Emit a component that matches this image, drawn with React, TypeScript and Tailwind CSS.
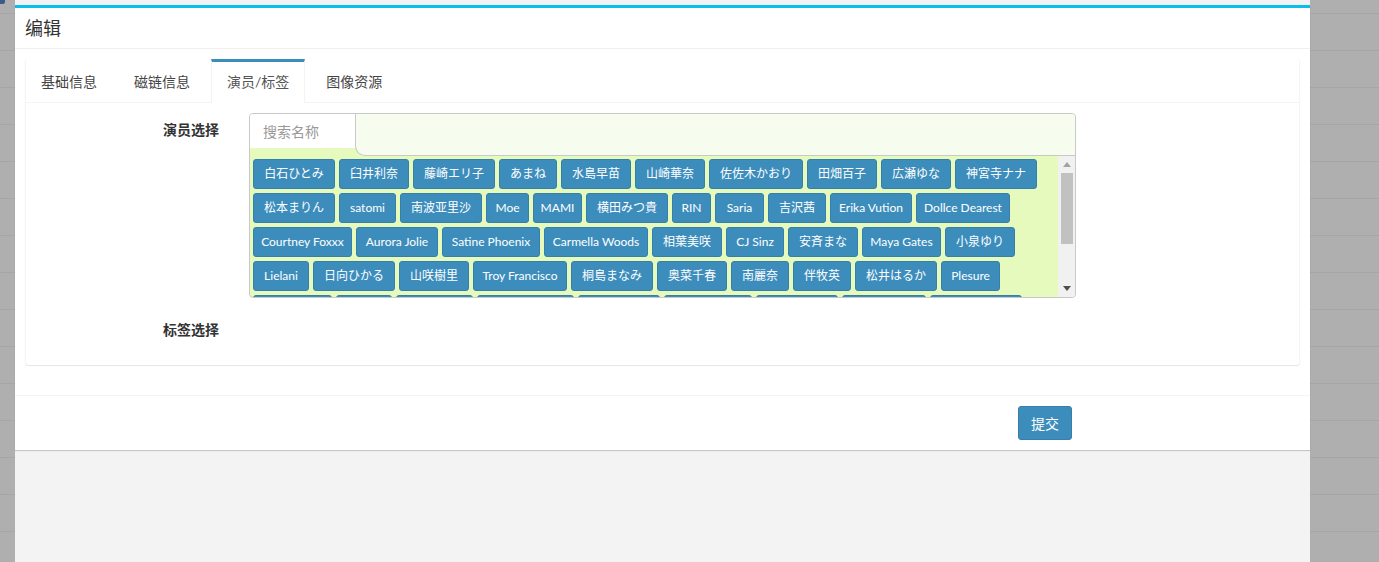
import React from "react";

type Tag = { n: string; w: number };

const rows: Tag[][] = [
  [
    { n: "白石ひとみ", w: 82 },
    { n: "臼井利奈", w: 70 },
    { n: "藤崎エリ子", w: 82 },
    { n: "あまね", w: 58 },
    { n: "水島早苗", w: 70 },
    { n: "山崎華奈", w: 70 },
    { n: "佐佐木かおり", w: 94 },
    { n: "田畑百子", w: 70 },
    { n: "広瀬ゆな", w: 70 },
    { n: "神宮寺ナナ", w: 82 },
  ],
  [
    { n: "松本まりん", w: 82 },
    { n: "satomi", w: 57 },
    { n: "南波亚里沙", w: 82 },
    { n: "Moe", w: 43 },
    { n: "MAMI", w: 49 },
    { n: "横田みつ貴", w: 82 },
    { n: "RIN", w: 39 },
    { n: "Saria", w: 49 },
    { n: "吉沢茜", w: 58 },
    { n: "Erika Vution", w: 82 },
    { n: "Dollce Dearest", w: 94 },
  ],
  [
    { n: "Courtney Foxxx", w: 99 },
    { n: "Aurora Jolie", w: 82 },
    { n: "Satine Phoenix", w: 98 },
    { n: "Carmella Woods", w: 104 },
    { n: "相葉美咲", w: 70 },
    { n: "CJ Sinz", w: 58 },
    { n: "安斉まな", w: 70 },
    { n: "Maya Gates", w: 79 },
    { n: "小泉ゆり", w: 70 },
  ],
  [
    { n: "Lielani", w: 56 },
    { n: "日向ひかる", w: 82 },
    { n: "山咲樹里", w: 70 },
    { n: "Troy Francisco", w: 94 },
    { n: "桐島まなみ", w: 82 },
    { n: "奥菜千春", w: 70 },
    { n: "南麗奈", w: 58 },
    { n: "伴牧英", w: 58 },
    { n: "松井はるか", w: 82 },
    { n: "Plesure", w: 59 },
  ],
  [
    { n: "", w: 79 },
    { n: "", w: 56 },
    { n: "", w: 77 },
    { n: "", w: 97 },
    { n: "", w: 82 },
    { n: "", w: 88 },
    { n: "", w: 82 },
    { n: "", w: 84 },
    { n: "", w: 92 },
  ],
];

const font = "font-['Lato','Noto_Sans_CJK_SC',sans-serif]";

export default function App() {
  const bgRows = Array.from({ length: 15 });
  return (
    <div className={`relative w-[1379px] h-[562px] overflow-hidden bg-[#afafaf] ${font}`}>
      {/* page behind overlay */}
      <div className="flex flex-col">
        <div className="h-[13px]" />
        {bgRows.map((_, i) => (
          <div key={i} className="h-[37px] border-t border-[#a6a6a6]" />
        ))}
      </div>
      <div className="absolute top-0 left-0 w-[5px] h-[4px] rounded-br-[2px] bg-[#3b5b88]" />

      {/* modal column */}
      <div className="absolute top-0 left-[15px] w-[1295px] h-full bg-[#f3f3f3] pt-[5px]">
        <div className="bg-white border-t-[3px] border-[#0bbfea] shadow-[0_1px_1px_rgba(0,0,0,0.18)]">
          {/* header */}
          <div className="h-[41px] px-[10px] flex items-center border-b border-[#f0f0f0] text-[18px] text-[#333]">
            编辑
          </div>
          {/* body */}
          <div className="p-[10px]">
            <div className="mb-[20px] bg-white rounded-[3px] shadow-[0_1px_1px_rgba(0,0,0,0.1),inset_1px_0_0_#f5f5f5,inset_-1px_0_0_#f5f5f5]">
              {/* tabs */}
              <ul className="flex border-b border-[#f4f4f4] text-[14px] leading-[20px] text-[#444]">
                <li className="mr-[5px]">
                  <div className="border-t-[3px] border-x border-transparent px-[15px] py-[10px]">基础信息</div>
                </li>
                <li className="mr-[5px]">
                  <div className="border-t-[3px] border-x border-transparent px-[15px] py-[10px]">磁链信息</div>
                </li>
                <li className="mr-[5px] -mb-px">
                  <div className="border-t-[3px] border-t-[#3c8dbc] border-x border-x-[#f4f4f4] bg-white px-[15px] py-[10px] pb-[11px] text-[#555]">
                    演员/标签
                  </div>
                </li>
                <li className="mr-[5px]">
                  <div className="border-t-[3px] border-x border-transparent px-[15px] py-[10px]">图像资源</div>
                </li>
              </ul>
              {/* content */}
              <div className="pt-[10px] pb-[10px]">
                <div className="flex mb-[15px]">
                  <div className="w-[209px] pr-[15px] pt-[7px] text-right text-[14px] leading-[20px] font-bold text-[#333]">
                    演员选择
                  </div>
                  <div className="ml-[15px] w-[827px] h-[185px] border border-[#c9c9c9] rounded-[4px] bg-[#e6fabe] overflow-hidden flex flex-col">
                    <div className="flex items-start h-[42px] shrink-0">
                      <input
                        className="w-[105px] h-[34px] bg-white pl-[13px] text-[14px] text-[#555] placeholder:text-[#999] outline-none"
                        placeholder="搜索名称"
                      />
                      <div className="flex-1 h-[42px] bg-[#f6fdee] border-l border-b border-[#c9c9c9] rounded-bl-[10px]" />
                    </div>
                    <div className="flex flex-1 min-h-0">
                      <div className="flex-1 overflow-hidden pl-[3px] pt-[3px]">
                        <div className="flex flex-col gap-[4px]">
                          {rows.map((r, ri) => (
                            <div key={ri} className="flex gap-[4px]">
                              {r.map((t, ti) => (
                                <div
                                  key={ti}
                                  style={{ width: t.w }}
                                  className="h-[30px] shrink-0 flex items-center justify-center bg-[#3c8dbc] border border-[#367fa9] rounded-[3px] text-white text-[12px] leading-[18px] whitespace-nowrap"
                                >
                                  {t.n}
                                </div>
                              ))}
                            </div>
                          ))}
                        </div>
                      </div>
                      {/* scrollbar */}
                      <div className="w-[17px] bg-[#f1f1f1] flex flex-col items-center">
                        <div className="h-[17px] flex items-center justify-center">
                          <svg width="8" height="5" viewBox="0 0 8 5">
                            <path d="M4 0 L8 5 L0 5 Z" fill="#a3a3a3" />
                          </svg>
                        </div>
                        <div className="w-[12px] h-[71px] bg-[#c1c1c1]" />
                        <div className="flex-1" />
                        <div className="h-[17px] flex items-center justify-center">
                          <svg width="8" height="5" viewBox="0 0 8 5">
                            <path d="M0 0 L8 0 L4 5 Z" fill="#505050" />
                          </svg>
                        </div>
                      </div>
                    </div>
                  </div>
                </div>
                <div className="flex h-[42px]">
                  <div className="w-[209px] pr-[15px] pt-[7px] text-right text-[14px] leading-[20px] font-bold text-[#333]">
                    标签选择
                  </div>
                </div>
              </div>
            </div>
          </div>
          {/* footer */}
          <div className="border-t border-[#f4f4f4] pt-[10px] pb-[10px] pl-[1003px]">
            <button className="h-[34px] w-[54px] bg-[#3c8dbc] border border-[#367fa9] rounded-[3px] text-white text-[14px]">
              提交
            </button>
          </div>
        </div>
      </div>
    </div>
  );
}
